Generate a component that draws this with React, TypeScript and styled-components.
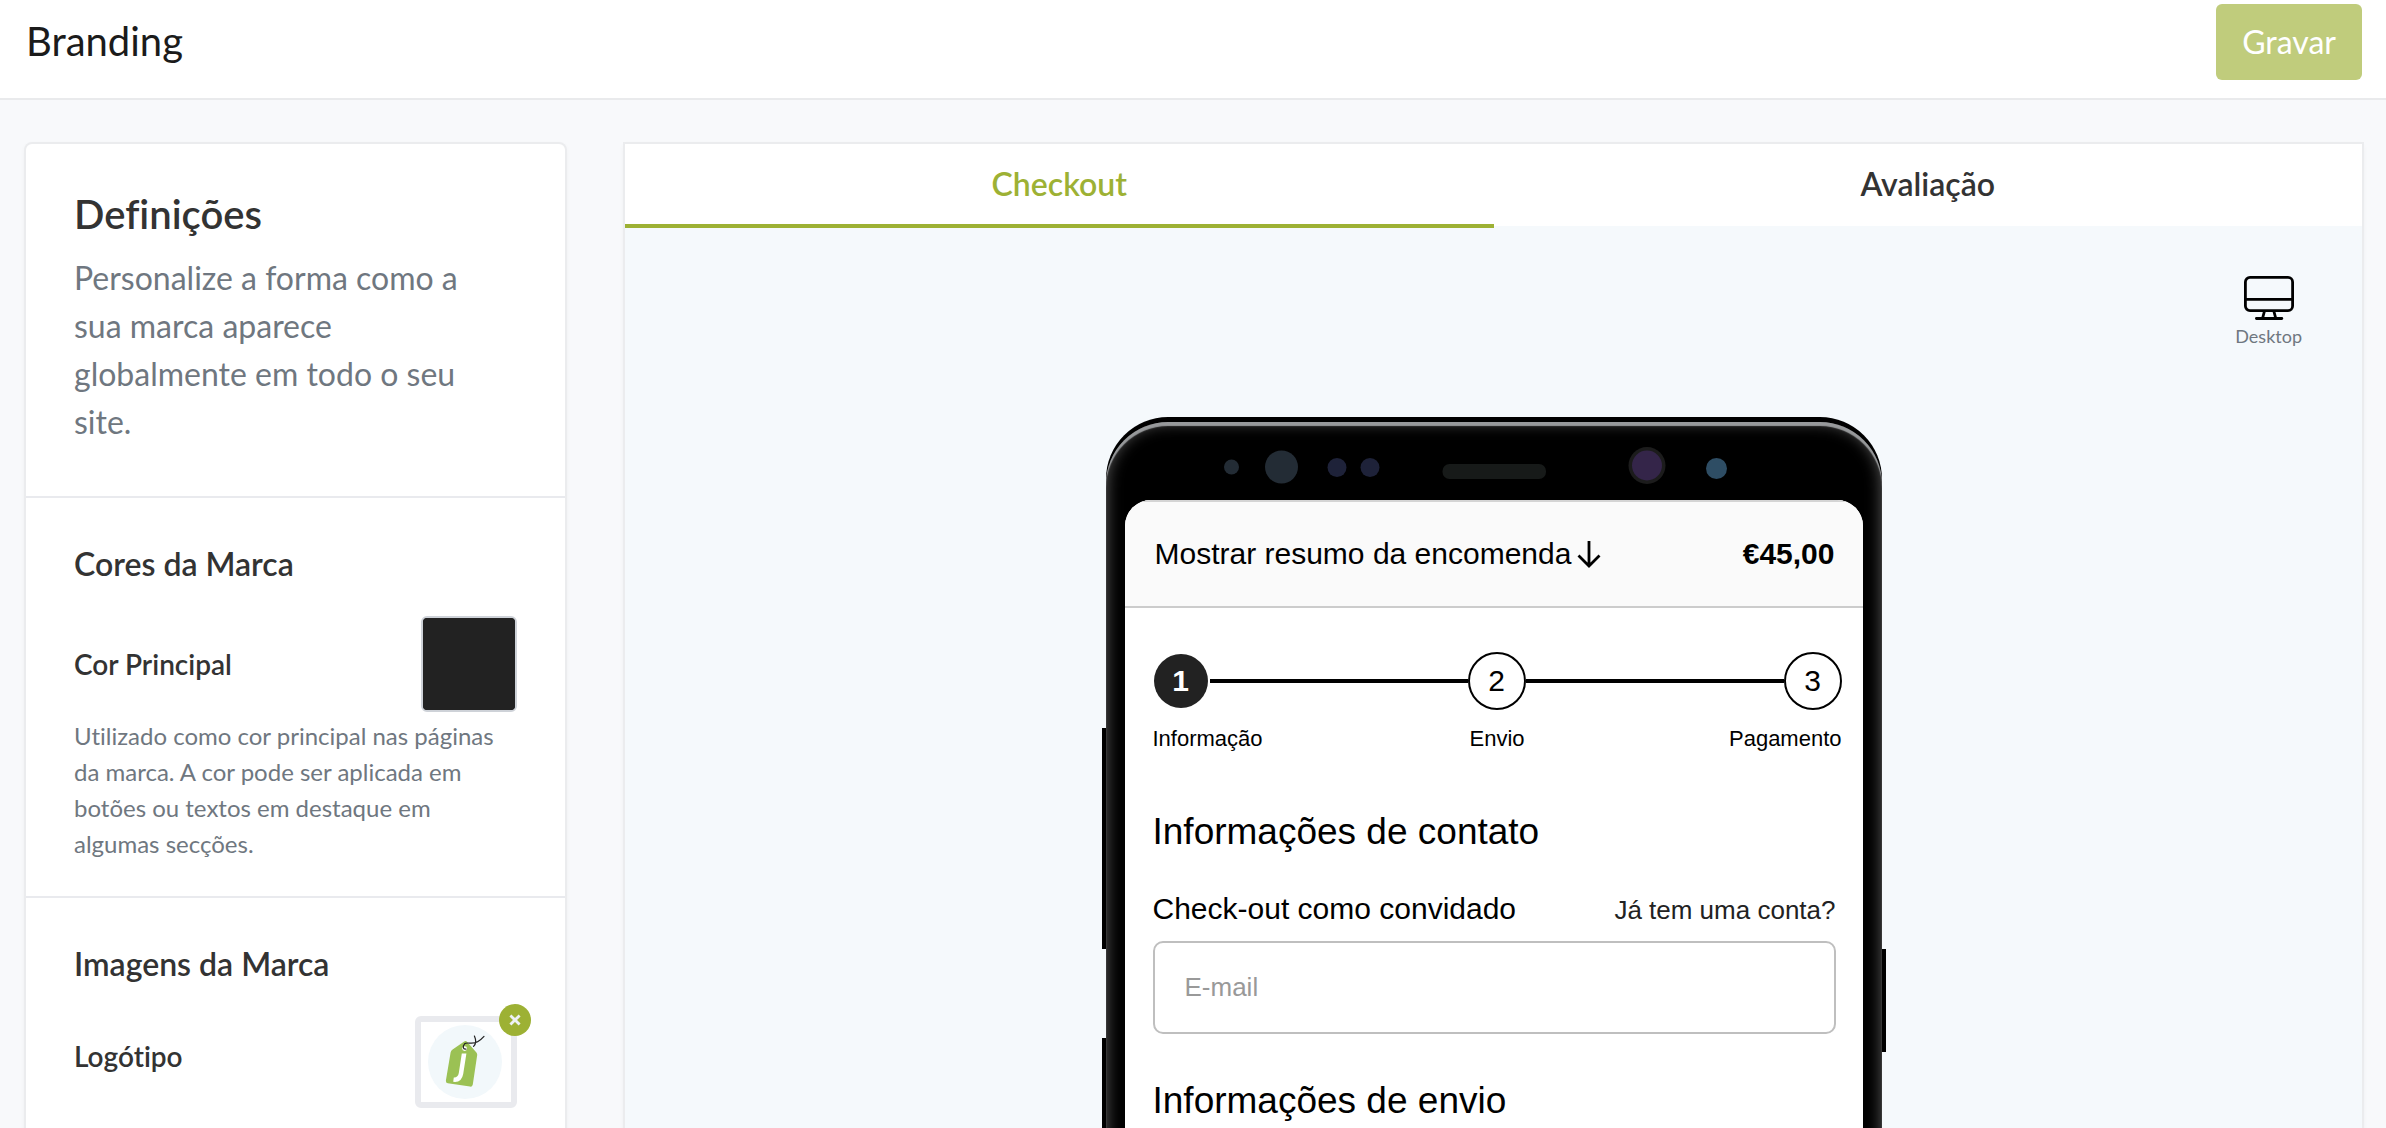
import React from "react";
import styled, { createGlobalStyle, css } from "styled-components";

const GlobalStyle = createGlobalStyle`
  *, *::before, *::after { box-sizing: border-box; }
  body {
    margin: 0;
    background: #f8f9fb;
    color: #333;
    font-family: Lato, "Open Sans", sans-serif;
    font-variant-ligatures: no-common-ligatures;
  }
  h1, h2, h3, p, ol { margin: 0; padding: 0; }
  button { font: inherit; cursor: pointer; }
`;

const Page = styled.div`
  display: flex;
  flex-direction: column;
  height: 100vh;
  overflow: hidden;
`;

const TopBar = styled.header`
  display: flex;
  flex: none;
  align-items: flex-start;
  justify-content: space-between;
  padding: 4px 24px 18px 26px;
  background: #fff;
  border-bottom: 2px solid #e9eaec;
`;

const PageTitle = styled.h1`
  font-size: 40px;
  font-weight: 400;
  line-height: 74px;
  color: #1b1b1b;
`;

const SaveButton = styled.button`
  height: 76px;
  padding: 0 26px 2px;
  border: 0;
  border-radius: 6px;
  background: #c0cc7c;
  color: #fff;
  font-size: 32px;
`;

const Columns = styled.main`
  display: grid;
  flex: 1;
  min-height: 0;
  grid-template-columns: 539px 1fr;
  gap: 60px;
  padding: 44px 24px 0 26px;
`;

const cardShadow = css`
  box-shadow: 0 0 0 2px #ebecee, 0 2px 6px rgba(0, 0, 0, 0.08);
`;

const Sidebar = styled.aside`
  background: #fff;
  border-radius: 6px 6px 0 0;
  ${cardShadow}
`;

const Section = styled.section`
  padding: 46px 48px 34px;
  border-bottom: 2px solid #e9eaee;
  &:last-child { border-bottom: 0; }
`;

const SidebarTitle = styled.h2`
  font-size: 40px;
  font-weight: 600;
  line-height: 48px;
`;

const Lead = styled.p`
  padding: 16px 40px 16px 0;
  font-size: 32px;
  line-height: 48px;
  color: #6f7780;
`;

const SectionTitle = styled.h3`
  font-size: 32px;
  font-weight: 600;
  line-height: 40px;
`;

const SettingRow = styled.div<{ $gap: number }>`
  display: flex;
  align-items: center;
  justify-content: space-between;
  margin-top: ${(p) => p.$gap}px;
`;

const SettingLabel = styled.label`
  font-size: 28px;
  font-weight: 600;
`;

const Swatch = styled.input`
  width: 96px;
  height: 96px;
  padding: 0;
  border: 2px solid #ced2d8;
  border-radius: 6px;
  background: #222;
  appearance: none;
  &::-webkit-color-swatch-wrapper { padding: 0; }
  &::-webkit-color-swatch { border: 0; border-radius: 4px; }
`;

const Hint = styled.p`
  margin-top: 6px;
  font-size: 24px;
  line-height: 36px;
  color: #6f7780;
`;

const LogoBox = styled.div`
  position: relative;
  display: grid;
  place-items: center;
  width: 102px;
  height: 92px;
  margin-top: 12px;
  border: 6px solid #e9eaee;
  border-radius: 6px;
`;

const RemoveButton = styled.button`
  position: absolute;
  top: -18px;
  right: -20px;
  display: grid;
  place-items: center;
  width: 32px;
  height: 32px;
  padding: 0;
  border: 0;
  border-radius: 50%;
  background: #9db134;
`;

const Preview = styled.section`
  display: flex;
  flex-direction: column;
  min-width: 0;
  background: #f5f9fc;
  ${cardShadow}
`;

const Tabs = styled.div`
  display: flex;
  flex: none;
  height: 84px;
  background: linear-gradient(#fff 82px, transparent 82px);
`;

const Tab = styled.button<{ $active?: boolean }>`
  flex: 1;
  padding: 0 0 2px;
  border: 0;
  border-bottom: 4px solid ${(p) => (p.$active ? "#9db134" : "transparent")};
  background: none;
  color: ${(p) => (p.$active ? "#9db134" : "#333")};
  font-size: 32px;
  font-weight: 600;
`;

const DeviceBar = styled.div`
  display: flex;
  justify-content: flex-end;
  height: 189px;
  flex: none;
  padding: 48px 60px 0 0;
`;

const DeviceButton = styled.button`
  display: flex;
  flex-direction: column;
  align-items: center;
  align-self: flex-start;
  gap: 4px;
  padding: 0;
  border: 0;
  background: none;
  color: #6f7780;
  font-size: 18px;
  line-height: 24px;
`;

const Phone = styled.div`
  position: relative;
  display: flex;
  flex: 1;
  align-self: center;
  width: 776px;
  min-height: 0;
  margin-bottom: -40px;
  padding-top: 5px;
  border-radius: 62px 62px 0 0;
  background: #000;
  font-family: "Liberation Sans", Arial, sans-serif;
  color: #000;
`;

const SideKey = styled.span<{ $side: "left" | "right"; $top: number; $length: number }>`
  position: absolute;
  top: ${(p) => p.$top}px;
  ${(p) => p.$side}: -4px;
  width: 4px;
  height: ${(p) => p.$length}px;
  background: #000;
`;

const PhoneFace = styled.div`
  flex: 1;
  min-width: 0;
  padding: 0 19px;
  border-radius: 62px 62px 0 0;
  box-shadow: inset 0 4px 1px #97999b, inset 0 0 16px rgba(255, 255, 255, 0.38);
`;

const Sensors = styled.svg`
  display: block;
  width: 100%;
  height: 78px;
`;

const Screen = styled.div`
  height: 100%;
  overflow: hidden;
  border-radius: 26px 26px 0 0;
  background: #fff;
`;

const Summary = styled.div`
  display: flex;
  align-items: center;
  justify-content: space-between;
  height: 108px;
  padding: 0 28px 0 30px;
  border-top: 2px solid #d4d4d4;
  border-bottom: 2px solid #ccc;
  background: #fafafa;
  font-size: 30px;
`;

const SummaryToggle = styled.button`
  display: flex;
  align-items: center;
  gap: 6px;
  padding: 0;
  border: 0;
  background: none;
  color: inherit;
`;

const Steps = styled.ol`
  display: grid;
  grid-template-columns: auto 1fr auto 1fr auto;
  align-items: center;
  padding: 44px 21px 0 27px;
  list-style: none;
`;

const StepDot = styled.li<{ $active?: boolean }>`
  display: grid;
  place-items: center;
  width: 58px;
  height: 58px;
  border: 2px solid ${(p) => (p.$active ? "transparent" : "#000")};
  border-radius: 50%;
  background: ${(p) => (p.$active ? "#222" : "#fff")};
  background-clip: padding-box;
  color: ${(p) => (p.$active ? "#fff" : "#000")};
  font-size: 30px;
  font-weight: ${(p) => (p.$active ? 700 : 400)};
`;

const StepLine = styled.li`
  height: 4px;
  background: #000;
`;

const StepLabels = styled.div`
  display: flex;
  justify-content: space-between;
  padding: 15px 21px 12px 28px;
  font-size: 22px;
  line-height: 28px;
  & > * { flex: 1; }
  & > :nth-child(2) { text-align: center; }
  & > :nth-child(3) { text-align: right; }
`;

const Form = styled.div`
  padding: 0 27px 0 28px;
`;

const FormTitle = styled.h2`
  padding-top: 43px;
  font-size: 37px;
  font-weight: 400;
  line-height: 48px;
`;

const FormRow = styled.div`
  display: flex;
  align-items: baseline;
  justify-content: space-between;
  padding: 35px 0 13px;
  line-height: 36px;
`;

const FieldLabel = styled.label`
  font-size: 30px;
`;

const AccountLink = styled.a`
  color: #222;
  font-size: 26px;
  text-decoration: none;
`;

const EmailInput = styled.input`
  display: block;
  width: 100%;
  height: 93px;
  padding: 0 30px;
  border: 2px solid #bfbfbf;
  border-radius: 10px;
  background: #fff;
  font-family: inherit;
  font-size: 26px;
  &::placeholder { color: #999; opacity: 1; }
`;

const MonitorIcon = () => (
  <svg width="50" height="44" viewBox="0 0 50 44" fill="none" stroke="#000" strokeWidth="2.8" aria-hidden="true">
    <rect x="1.4" y="1.4" width="47.2" height="33.2" rx="4.6" />
    <path d="M1 23.4H49M20.5 35L18.5 42.5M29.8 35L31.8 42.5" />
    <path d="M12.4 42.5H37.8" strokeLinecap="round" />
  </svg>
);

const BrandLogo = () => (
  <svg width="78" height="78" viewBox="0 0 78 78" role="img" aria-label="Logótipo da marca">
    <circle cx="38" cy="39" r="37" fill="#f2f8fb" />
    <path
      d="M25.6 26.6L37.2 18.4Q38.8 17.6 40 18.8L49.4 29.4Q50.4 30.6 50.2 32L45.8 61.4Q45.2 64 43 63.6L20.8 60.2Q18.6 59.8 18.9 57.4L23.6 29.6Q24 27.8 25.6 26.6Z"
      fill="#9bc154"
    />
    <circle cx="37.6" cy="25.6" r="2.4" fill="#fff" />
    <path d="M39.4 30.6L36.2 51Q34.6 60 26.2 58.8L26.8 54.4Q31 54.6 31.8 50L34.8 30.4Z" fill="#fff" />
    <path
      d="M39 26C36 26.6 35.4 23.6 37.6 20.8C40 18.6 46 21.8 50.6 18.8Q54.4 16.4 57 13.4M47.4 13Q50.4 19.6 46.6 23.4"
      fill="none"
      stroke="#222"
      strokeWidth="1.2"
      strokeLinecap="round"
    />
  </svg>
);

const CrossIcon = () => (
  <svg width="12" height="12" viewBox="0 0 12 12" stroke="#eef1f6" strokeWidth="2.8" aria-hidden="true">
    <path d="M1.4 1.4L10.6 10.6M10.6 1.4L1.4 10.6" />
  </svg>
);

const ArrowDownIcon = () => (
  <svg width="24" height="28" viewBox="0 0 24 28" fill="none" stroke="#000" strokeWidth="2.8" aria-hidden="true">
    <path d="M12 1V26M1.5 15.5L12 26L22.5 15.5" />
  </svg>
);

export default function App() {
  return (
    <Page>
      <GlobalStyle />
      <TopBar>
        <PageTitle>Branding</PageTitle>
        <SaveButton type="button">Gravar</SaveButton>
      </TopBar>
      <Columns>
        <Sidebar>
          <Section>
            <SidebarTitle>Definições</SidebarTitle>
            <Lead>Personalize a forma como a sua marca aparece globalmente em todo o seu site.</Lead>
          </Section>
          <Section>
            <SectionTitle>Cores da Marca</SectionTitle>
            <SettingRow $gap={32}>
              <SettingLabel htmlFor="main-color">Cor Principal</SettingLabel>
              <Swatch id="main-color" type="color" defaultValue="#222222" />
            </SettingRow>
            <Hint>
              Utilizado como cor principal nas páginas da marca. A cor pode ser aplicada em botões ou textos em
              destaque em algumas secções.
            </Hint>
          </Section>
          <Section>
            <SectionTitle>Imagens da Marca</SectionTitle>
            <SettingRow $gap={20}>
              <SettingLabel as="span">Logótipo</SettingLabel>
              <LogoBox>
                <BrandLogo />
                <RemoveButton type="button" aria-label="Remover logótipo">
                  <CrossIcon />
                </RemoveButton>
              </LogoBox>
            </SettingRow>
          </Section>
        </Sidebar>
        <Preview>
          <Tabs role="tablist">
            <Tab type="button" role="tab" aria-selected="true" $active>
              Checkout
            </Tab>
            <Tab type="button" role="tab" aria-selected="false">
              Avaliação
            </Tab>
          </Tabs>
          <DeviceBar>
            <DeviceButton type="button">
              <MonitorIcon />
              Desktop
            </DeviceButton>
          </DeviceBar>
          <Phone>
            <SideKey $side="left" $top={311} $length={221} />
            <SideKey $side="left" $top={621} $length={221} />
            <SideKey $side="right" $top={532} $length={103} />
            <PhoneFace>
              <Sensors viewBox="0 0 738 78" aria-hidden="true">
                <circle cx="106.5" cy="45" r="7.5" fill="#232c35" />
                <circle cx="156.5" cy="45" r="16.5" fill="#232c35" />
                <circle cx="212" cy="45.5" r="9.5" fill="#1e2239" />
                <circle cx="245" cy="45.5" r="9.5" fill="#1e2239" />
                <rect x="317.5" y="42" width="103.5" height="15" rx="7" fill="#171a19" />
                <circle cx="522" cy="43.5" r="18.5" fill="#1c1c1c" />
                <circle cx="522" cy="43.5" r="15" fill="#342549" />
                <circle cx="591.5" cy="46.5" r="10.5" fill="#2e4d64" />
              </Sensors>
              <Screen>
                <Summary>
                  <SummaryToggle type="button">
                    Mostrar resumo da encomenda
                    <ArrowDownIcon />
                  </SummaryToggle>
                  <strong>€45,00</strong>
                </Summary>
                <Steps>
                  <StepDot $active>1</StepDot>
                  <StepLine aria-hidden="true" />
                  <StepDot>2</StepDot>
                  <StepLine aria-hidden="true" />
                  <StepDot>3</StepDot>
                </Steps>
                <StepLabels>
                  <span>Informação</span>
                  <span>Envio</span>
                  <span>Pagamento</span>
                </StepLabels>
                <Form>
                  <FormTitle>Informações de contato</FormTitle>
                  <FormRow>
                    <FieldLabel htmlFor="email">Check-out como convidado</FieldLabel>
                    <AccountLink href="#conta">Já tem uma conta?</AccountLink>
                  </FormRow>
                  <EmailInput id="email" type="email" placeholder="E-mail" />
                  <FormTitle>Informações de envio</FormTitle>
                </Form>
              </Screen>
            </PhoneFace>
          </Phone>
        </Preview>
      </Columns>
    </Page>
  );
}
